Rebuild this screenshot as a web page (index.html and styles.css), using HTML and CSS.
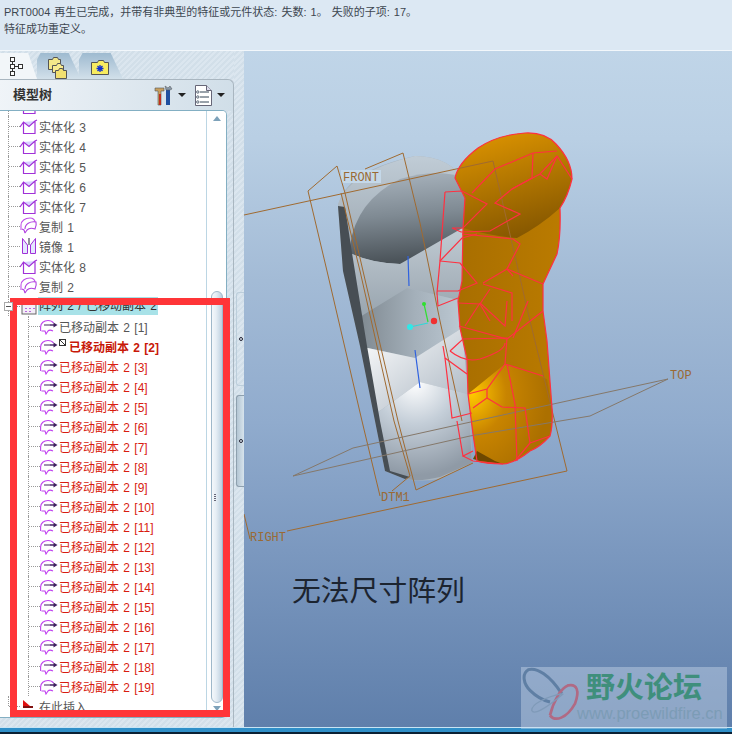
FILE: index.html
```html
<!DOCTYPE html>
<html lang="zh">
<head>
<meta charset="utf-8">
<title>模型树</title>
<link rel="stylesheet" href="styles.css">
</head>
<body>
<svg class="defs" width="0" height="0">
  <symbol id="solid" viewBox="0 0 18 18"><path d="M3.500 5L9 9.500 15 4z" fill="#d8d0ff"/><path d="M0 10L3.500 5 9 9.500 15 4l2-1M3.500 6v10.500H15V4" fill="none" stroke="#a030d8" stroke-width="1.200"/></symbol>
  <symbol id="copy" viewBox="0 0 18 18"><path d="M1 13V8C1 4 5 1 10 1c3 0 5 2 5 4" fill="none" stroke="#c050e8" stroke-width="1.100"/><path d="M5 16l-1-3-2-1M5 16l2-3c2-2 5-2 8-1 1-2 1.500-5 1-7-6-1-11 2-11 7" fill="none" stroke="#b040e0" stroke-width="1.100"/></symbol>
  <symbol id="mirror" viewBox="0 0 18 18"><path d="M2.500 1.500V16.500H7.500V8zM15.500 1.500V16.500H10.500V8z" fill="#e4e8ff" stroke="#a030d8"/><path d="M8.500 1v7M9.500 1v7" stroke="#445" stroke-width=".6"/></symbol>
  <symbol id="moved" viewBox="0 0 18 18"><path d="M.6 14V10C.6 6 4 3.500 8 3.500c2.500 0 4.500 1 5.500 2.500M13 14c-2-1-4-1-5 0l-2 3-1-3H1.500" fill="none" stroke="#c040f0" stroke-width="1.100"/><path d="M5 7v2M7 7v2M9 7v2" stroke="#402060"/><path d="M10 8h4" stroke="#402060" stroke-width="1.400"/><path d="M13.500 5.500l4 2.500-4 2.500z" fill="#402060"/></symbol>
  <symbol id="pattern" viewBox="0 0 18 18"><rect x="2" y="4" width="14" height="13" fill="#f4eef8" stroke="#666"/><path d="M6 7v1M10 7v1M14 7v1M6 11v1M10 11v1M14 11v1M6 14v1M10 14v1" stroke="#a030d0" stroke-width="1.400"/></symbol>
</svg>

<header class="messages">
  <p class="msg msg-clipped"><span class="msg-mark"></span>特征成功重定义。</p>
  <p class="msg">PRT0004 再生已完成，并带有非典型的特征或元件状态: 失数: 1。 失败的子项: 17。</p>
  <p class="msg">特征成功重定义。</p>
</header>

<main class="workspace">
  <aside class="sidebar">
    <nav class="tabs">
      <div class="tab tab-active">
        <svg width="18" height="20" viewBox="0 0 18 20"><g fill="#fff" stroke="#333"><rect x="1.500" y="1.500" width="4" height="4"/><rect x="1.500" y="8.500" width="4" height="4"/><rect x="1.500" y="15.500" width="4" height="4"/><rect x="9.500" y="8.500" width="4" height="4"/></g><path d="M3.500 6v2M3.500 13v2M6 10.500h3" stroke="#333"/></svg>
      </div>
      <div class="tab tab-second">
        <svg width="20" height="24" viewBox="0 0 20 24"><g stroke="#555"><path d="M1.500 4.500h4l1-2h4l1 2h2v10h-12z" fill="#f4e88a"/><path d="M5.500 10.500h4l1-2h3l1 2h2v7h-11z" fill="#f8ec90"/><path d="M8.500 15.500h3l1-2h3l1 2h3v8h-11z" fill="#f2e070"/></g></svg>
      </div>
      <div class="tab tab-third">
        <svg width="18" height="16" viewBox="0 0 18 16"><path d="M.5 3.500h6l1-2h5l1 2h4v12H.5z" fill="#f8ec60" stroke="#555"/><path d="M9 6v7M5.500 9.500h7M6.500 7l5 5M11.500 7l-5 5" stroke="#1030d0" stroke-width="1.300"/></svg>
      </div>
    </nav>
    <section class="panel">
      <div class="panel-head">
        <h1 class="panel-title">模型树</h1>
        <div class="panel-tools">
          <svg width="19" height="21" viewBox="0 0 19 21"><path d="M1 3h9v3H7v14H4V6H1z" fill="#c8a060" stroke="#555" stroke-width=".6"/><path d="M5 9h2v11H5z" fill="#c03020"/><path d="M12 5h4v15h-4z" fill="#2050a0"/><path d="M12 5l-1-4 3 2 2-2 2 3-2 1z" fill="#8898a8" stroke="#555" stroke-width=".5"/></svg>
          <span class="caret"></span>
          <svg class="tool-list" width="17" height="21" viewBox="0 0 17 21"><path d="M.5.500h11l5 5v15H.5z" fill="#fff" stroke="#667"/><path d="M11.500.5v5h5" fill="#dde" stroke="#667"/><g stroke="#345"><path d="M5 7h9M5 12h9M5 17h9"/></g><g fill="#fff" stroke="#345" stroke-width=".8"><circle cx="2.800" cy="7" r="1.200"/><circle cx="2.800" cy="12" r="1.200"/><circle cx="2.800" cy="17" r="1.200"/></g></svg>
          <span class="caret"></span>
        </div>
      </div>
      <div class="tree">
        <ul class="rows">
          <li class="row"><svg class="ico"><use href="#solid"/></svg></li>
          <li class="row"><svg class="ico"><use href="#solid"/></svg>实体化 3</li>
          <li class="row"><svg class="ico"><use href="#solid"/></svg>实体化 4</li>
          <li class="row"><svg class="ico"><use href="#solid"/></svg>实体化 5</li>
          <li class="row"><svg class="ico"><use href="#solid"/></svg>实体化 6</li>
          <li class="row"><svg class="ico"><use href="#solid"/></svg>实体化 7</li>
          <li class="row"><svg class="ico"><use href="#copy"/></svg>复制 1</li>
          <li class="row"><svg class="ico"><use href="#mirror"/></svg>镜像 1</li>
          <li class="row"><svg class="ico"><use href="#solid"/></svg>实体化 8</li>
          <li class="row"><svg class="ico"><use href="#copy"/></svg>复制 2</li>
          <li class="row row-pattern"><span class="expander"></span><svg class="ico"><use href="#pattern"/></svg><span class="selected">阵列 2 / 已移动副本 2</span></li>
          <li class="row child"><svg class="ico"><use href="#moved"/></svg>已移动副本 2 [1]</li>
          <li class="row child fail-main"><svg class="ico"><use href="#moved"/></svg><span class="fail-mark"></span><b>已移动副本 2 [2]</b></li>
          <li class="row child fail"><svg class="ico"><use href="#moved"/></svg>已移动副本 2 [3]</li>
          <li class="row child fail"><svg class="ico"><use href="#moved"/></svg>已移动副本 2 [4]</li>
          <li class="row child fail"><svg class="ico"><use href="#moved"/></svg>已移动副本 2 [5]</li>
          <li class="row child fail"><svg class="ico"><use href="#moved"/></svg>已移动副本 2 [6]</li>
          <li class="row child fail"><svg class="ico"><use href="#moved"/></svg>已移动副本 2 [7]</li>
          <li class="row child fail"><svg class="ico"><use href="#moved"/></svg>已移动副本 2 [8]</li>
          <li class="row child fail"><svg class="ico"><use href="#moved"/></svg>已移动副本 2 [9]</li>
          <li class="row child fail"><svg class="ico"><use href="#moved"/></svg>已移动副本 2 [10]</li>
          <li class="row child fail"><svg class="ico"><use href="#moved"/></svg>已移动副本 2 [11]</li>
          <li class="row child fail"><svg class="ico"><use href="#moved"/></svg>已移动副本 2 [12]</li>
          <li class="row child fail"><svg class="ico"><use href="#moved"/></svg>已移动副本 2 [13]</li>
          <li class="row child fail"><svg class="ico"><use href="#moved"/></svg>已移动副本 2 [14]</li>
          <li class="row child fail"><svg class="ico"><use href="#moved"/></svg>已移动副本 2 [15]</li>
          <li class="row child fail"><svg class="ico"><use href="#moved"/></svg>已移动副本 2 [16]</li>
          <li class="row child fail"><svg class="ico"><use href="#moved"/></svg>已移动副本 2 [17]</li>
          <li class="row child fail"><svg class="ico"><use href="#moved"/></svg>已移动副本 2 [18]</li>
          <li class="row child fail"><svg class="ico"><use href="#moved"/></svg>已移动副本 2 [19]</li>
          <li class="row row-insert"><svg class="ico" viewBox="0 0 18 18"><path d="M3 3l7 6H3z" fill="#e01010"/><path d="M3 9h10v2H3z" fill="#801010"/></svg>在此插入</li>
        </ul>
        <div class="scrollbar">
          <span class="arrow-up"></span>
          <span class="thumb"><span class="grip"></span></span>
          <span class="arrow-down"></span>
        </div>
      </div>
    </section>
  </aside>
  <div class="sash">
    <span class="sash-handle handle-a"><i></i></span>
    <span class="sash-handle handle-b"><i></i></span>
  </div>
  <div class="viewport">
    <svg class="model" viewBox="244 50 488 677" width="488" height="677">
      <defs>
        <linearGradient id="dome-outer" x1="0" y1="0" x2="0" y2="1"><stop offset="0" stop-color="#c0ccd6"/><stop offset="1" stop-color="#98a3ac"/></linearGradient>
        <linearGradient id="dome" x1="0" y1="0" x2=".1" y2="1"><stop offset="0" stop-color="#aab5bf"/><stop offset=".5" stop-color="#7f8a93"/><stop offset="1" stop-color="#4b5359"/></linearGradient>
        <linearGradient id="band2" x1="0" y1="0" x2="0" y2="1"><stop offset="0" stop-color="#c2ccd4"/><stop offset="1" stop-color="#98a4ae"/></linearGradient>
        <linearGradient id="band3" x1="0" y1="0" x2="1" y2="0"><stop offset="0" stop-color="#7e8890"/><stop offset=".55" stop-color="#a4b0ba"/><stop offset="1" stop-color="#bcc8d2"/></linearGradient>
        <linearGradient id="band4" x1="0" y1="0" x2="1" y2="1"><stop offset="0" stop-color="#fff"/><stop offset="1" stop-color="#a8b4c0"/></linearGradient>
        <radialGradient id="band5" cx=".4" cy="0" r=".95"><stop offset="0" stop-color="#fff"/><stop offset=".45" stop-color="#c4ced8"/><stop offset="1" stop-color="#8f9aa6"/></radialGradient>
        <linearGradient id="cap" x1=".3" y1="0" x2=".6" y2="1"><stop offset="0" stop-color="#da9200"/><stop offset="1" stop-color="#845600"/></linearGradient>
        <linearGradient id="orange" x1="0" y1="0" x2="1" y2="0"><stop offset="0" stop-color="#a86e00"/><stop offset="1" stop-color="#bc7c00"/></linearGradient>
        <radialGradient id="hot" cx=".05" cy=".3" r=".9"><stop offset="0" stop-color="#ffc800"/><stop offset=".45" stop-color="#c88400"/><stop offset="1" stop-color="#ac7000"/></radialGradient>
      </defs>

      <path d="M338 205Q345 170 415 155Q450 155 466 182L472 462L440 478Q420 481 405 478L385 470L375 420L360 345L343 270Z" fill="#a8b4be"/>
      <path d="M338 203Q350 170 415 155Q450 155 466 182L466 225Q440 258 400 263Q370 262 348 251Z" fill="url(#dome-outer)"/>
      <path d="M350 245Q356 200 400 178Q440 166 466 178L466 225Q440 258 400 263Q370 262 350 252Z" fill="url(#dome)"/>
      <path d="M348 251Q370 262 400 263L466 225L462 300L407 287L358 317Z" fill="url(#band2)"/>
      <path d="M358 317L407 287L462 300L462 327L415 357L363 346Z" fill="url(#band3)"/>
      <path d="M363 346L415 357L462 327L468 393L420 381L377 412Z" fill="url(#band4)"/>
      <path d="M377 412L420 381L468 393L472 462L440 476Q420 481 405 478L388 470Z" fill="url(#band5)"/>
      <path d="M338 205L343 270L360 345L375 420L385 470L405 478L410 476L390 470L380 420L367 345L352 252L345 206Z" fill="#474e54"/>

      <path d="M463 227L465 197L455 177Q458 162 478 147Q497 134 525 132Q545 131 556 143Q572 160 572 178Q568 195 560 207Q561 235 557 253L543 283L543 310L547 340L552 407Q553 425 550 435Q540 446 530 450Q515 462 503 463Q485 463 477 460L473 433L468 393L467 358L460 327L458 300L462 280Z" fill="url(#orange)"/>
      <path d="M468 393L505 363L547 378L552 407Q553 425 550 435Q540 446 530 450Q515 462 503 463Q485 463 477 460L473 433Z" fill="url(#hot)"/>
      <path d="M463 227L465 197L455 177Q458 162 478 147Q497 134 525 132Q545 131 556 143Q572 160 572 178Q568 195 560 207Q540 225 517 237Q490 235 463 227Z" fill="url(#cap)"/>
      <path d="M473 458L477 450L495 460L503 463L480 460Z" fill="#6e4800"/>

      <rect class="label-bg" x="341" y="169" width="40" height="13"/>
      <g fill="none" stroke="#a06a30" stroke-width="1">
        <path d="M244 214L493 160L530 320L567 470L287 530"/>
        <path d="M308 190L337 165L345 192L363 270L398 420L416 489L473 462"/>
        <path d="M365 168L403 152L420 222L440 320L462 420"/>
        <path d="M308 190L327 270L362 420L380 495"/>
        <path d="M341 192L360 270L394 420L410 475"/>
        <path d="M244 513L250 538"/>
        <path d="M392 490L410 475"/>
      </g>
      <path d="M293 475L353 447L457 424L590 395L668 378L590 415L470 435Z" fill="none" stroke="#85786a"/>

      <g fill="none" stroke="#ff3040" stroke-width="1.200">
        <path d="M463 227L465 197L455 177Q458 162 478 147Q497 134 525 132Q545 131 556 143Q572 160 572 178Q568 195 560 207Q561 235 557 253L543 283L543 310L547 340L552 407Q553 425 550 435Q540 446 530 450Q515 462 503 463Q485 463 477 460L473 433L468 393L467 358L460 327L458 300L462 280Z"/>
        <path d="M445 191L462 190L487 203L463 227L452 227L461 231L490 230L520 213L495 202L512 188L540 173L557 155L572 178"/>
        <path d="M472 192L495 168L533 152L557 150"/>
        <path d="M533 152L532 177L512 188"/>
        <path d="M540 173L547 178L557 155"/>
        <path d="M445 191L440 260L437 292L438 305L458 297"/>
        <path d="M437 290L458 290L477 282L460 262L440 260"/>
        <path d="M440 260L462 237L477 233"/>
        <path d="M462 233L513 238L520 243L507 268L543 283"/>
        <path d="M483 282L507 268M483 283L512 292L512 320"/>
        <path d="M458 302L480 303L490 320M480 303L490 288M507 268L513 275"/>
        <path d="M459 325L507 338L543 310"/>
        <path d="M450 350L463 338L507 337L505 363L543 375"/>
        <path d="M450 350Q465 362 480 358Q505 350 505 342"/>
        <path d="M505 363L487 388L468 393"/>
        <path d="M487 388V397L473 407"/>
        <path d="M487 397L502 406L525 407L530 442L550 435"/>
        <path d="M530 442L515 460"/>
        <path d="M443 345L445 357L452 417L472 412"/>
        <path d="M445 357L467 373"/>
        <path d="M457 420L463 455L473 450"/>
        <path d="M463 455L473 460L503 463"/>
        <path d="M480 302L505 325L507 300"/>
        <path d="M480 302L465 325"/>
        <path d="M513 337L528 300"/>
        <path d="M507 363L515 403L517 460"/>
      </g>

      <path d="M408 255L409 285M415 349L420 387" stroke="#2f62e0" stroke-width="1.200" fill="none"/>
      <path d="M424 303L428 321" stroke="#30e030" stroke-width="1.200"/>
      <path d="M410 326L428 322" stroke="#30d8d8" stroke-width="1.200"/>
      <circle cx="424" cy="303" r="2" fill="#30e030"/>
      <circle cx="410" cy="326" r="3" fill="#30e8e8"/>
      <circle cx="434" cy="320" r="3.200" fill="#f03030"/>

      <g class="datum">
        <text x="343" y="180">FRONT</text>
        <text x="670" y="378">TOP</text>
        <text x="381" y="500">DTM1</text>
        <text x="250" y="540">RIGHT</text>
      </g>
    </svg>
    <p class="note">无法尺寸阵列</p>
  </div>
  <div class="highlight"></div>
  <div class="watermark">
    <svg class="logo" width="60" height="60" viewBox="66 60 180 180"><path d="M185 140C150 85 110 60 85 68C65 80 70 110 90 130C110 150 130 160 150 165" fill="none" stroke="#5f7fa4" stroke-width="9"/><path d="M150 205C165 225 200 215 225 170C240 130 230 110 205 115C180 125 160 165 150 205" fill="none" stroke="#b06a84" stroke-width="8"/><path d="M185 140C140 150 95 170 95 190C100 205 130 190 190 140" fill="none" stroke="#7f9ab8" stroke-width="4"/></svg>
    <div class="brand">
      <span class="brand-name">野火论坛</span>
      <span class="brand-url">www.proewildfire.cn</span>
    </div>
  </div>
</main>
<footer class="statusbar"></footer>
</body>
</html>
```

FILE: styles.css
```css
* { box-sizing: border-box; }
html, body { margin: 0; padding: 0; }
body {
  width: 732px;
  height: 734px;
  overflow: hidden;
  position: relative;
  background: #dbe7f1;
  font-family: "Liberation Sans", "Noto Sans CJK SC", sans-serif;
  font-size: 12px;
  word-spacing: 1px;
  color: #444;
}
.defs { position: absolute; }
.messages {
  height: 51px;
  padding: 0 4px;
  overflow: hidden;
  background: #dce8f3;
  border-bottom: 1px solid #f2f7fb;
  color: #3c4650;
  font-size: 11px;
  word-spacing: 1px;
}
.msg { margin: 0; height: 17px; line-height: 17px; white-space: nowrap; }
.msg-clipped { margin-top: -13px; }
.msg-mark { display: inline-block; width: 7px; height: 7px; background: #f8d820; border: 1px solid #222; }
.workspace { display: flex; height: 676px; position: relative; }
.sidebar {
  width: 234px;
  display: flex;
  flex-direction: column;
  background: repeating-linear-gradient(135deg, #dbe6ef 0 2px, #d2dfe9 2px 4px);
}
.tabs { height: 28px; display: flex; padding-top: 2px; }
.tab {
  width: 44px;
  height: 26px;
  margin-right: -2px;
  display: flex;
  align-items: center;
  justify-content: center;
  background: linear-gradient(#9ebad0, #d2e0ea);
  clip-path: polygon(0 100%, 0 25%, 8% 0, 72% 0, 100% 100%);
}
.tab-active { width: 37px; margin-right: 0; background: #f2f6f9; justify-content: flex-start; padding-left: 9px; clip-path: polygon(0 0, 76% 0, 100% 100%, 0 100%); }
.tab-second svg { margin-top: 2px; margin-left: -4px; }
.tab-third svg { margin-top: 2px; margin-left: -2px; }
.panel {
  flex: 1;
  display: flex;
  flex-direction: column;
  min-height: 0;
  border-top: 1px solid #a9b6c0;
  border-right: 1px solid #a9b6c0;
  border-top-right-radius: 6px;
  padding-bottom: 9px;
  background: linear-gradient(100deg, #f0f4f8 0, #d0dee8 100%) top / 100% 31px no-repeat;
}
.panel-head {
  height: 30px;
  flex: none;
  display: flex;
  align-items: center;
  justify-content: space-between;
  padding: 0 8px 0 13px;
}
.panel-title { margin: -3px 0 0; font-size: 13px; font-weight: 700; color: #333; }
.panel-tools { display: flex; align-items: center; }
.tool-list { margin-left: 9px; }
.caret { width: 0; height: 0; margin-left: 5px; border: 4px solid transparent; border-top: 4px solid #222; border-bottom: 0; }
.tree {
  flex: 1;
  width: 227px;
  position: relative;
  overflow: hidden;
  background: #fff;
  border: 1px solid #83afc3;
  border-left: 0;
  border-radius: 0 5px 5px 0;
  display: flex;
  min-height: 0;
}
.rows { list-style: none; margin: -15px 0 0; padding: 0; flex: 1; min-width: 0; white-space: nowrap; }
.row { height: 20px; display: flex; align-items: center; padding-left: 20px; position: relative; color: #555; }
.row::before { content: ""; position: absolute; left: 9px; width: 11px; top: 10px; border-top: 1px dotted #999; }
.row::after { content: ""; position: absolute; left: 8px; top: 0; height: 20px; border-left: 1px dotted #999; }
.ico { width: 18px; height: 18px; flex: none; margin-right: 1px; }
.child { padding-left: 40px; }
.child::before { left: 29px; }
.child::after { left: 28px; }
.child .ico { margin-right: 1px; }
.row-insert::after { height: 10px; }
.fail { color: #d81c10; }
.fail-main { color: #c81808; }
.fail-main b { font-weight: 700; }
.fail-mark { width: 7px; height: 7px; margin: -7px 3px 0 0; background: linear-gradient(45deg, #fff 42%, #333 42% 58%, #fff 58%); border: 1px solid #333; flex: none; }
.row-pattern .ico { margin-right: 0; }
.selected { background: #a8e2e8; padding: 0 1px; height: 18px; line-height: 18px; color: #333; }
.expander { position: absolute; left: 4px; top: 6px; width: 9px; height: 9px; background: #fff; border: 1px solid #aaa; z-index: 1; }
.expander::after { content: ""; position: absolute; left: 1px; top: 3px; width: 5px; border-top: 1px solid #555; }
.scrollbar { width: 20px; flex: none; position: relative; background: #fff; border-left: 1px solid #bcd6e4; display: flex; flex-direction: column; align-items: center; }
.arrow-up { margin-top: 5px; border: 4px solid transparent; border-bottom: 5px solid #7ea2ba; border-top: 0; }
.arrow-down { margin-top: 3px; border: 4px solid transparent; border-top: 5px solid #7ea2ba; border-bottom: 0; }
.thumb {
  margin-top: 170px;
  width: 12px;
  height: 412px;
  border: 1px solid #9fb8ca;
  border-radius: 6px;
  background: linear-gradient(90deg, #f4f8fb, #e6eef5 40%, #bdd0df);
  display: flex;
  align-items: center;
  justify-content: center;
}
.grip { width: 2px; height: 7px; background: repeating-linear-gradient(#667 0 1px, transparent 1px 2px); margin-right: 4px; }
.sash { width: 10px; display: flex; flex-direction: column; background: repeating-linear-gradient(135deg, #dbe6ef 0 2px, #d2dfe9 2px 4px); padding-top: 241px; gap: 9px; }
.sash-handle { width: 9px; margin-left: 2px; border-radius: 3px 0 0 3px; display: flex; align-items: center; justify-content: center; }
.handle-a { height: 94px; border: 1px solid #bccedb; border-right: 0; }
.handle-b { height: 92px; border: 1px solid #8ea0ae; border-right: 0; background: linear-gradient(90deg, #b4c6d4, #dce8f0); }
.sash-handle i { width: 4px; height: 4px; background: #dfe8ef; border: 1px solid #223; border-radius: 2px; }
.viewport {
  flex: 1;
  position: relative;
  overflow: hidden;
  background: linear-gradient(#c0d5e8 0, #b9cfe4 13%, #a3bbd6 34%, #90abcd 55%, #7b98bf 74%, #5f7fab 100%);
}
.model { display: block; }
.label-bg { fill: #c4d8e9; }
.datum text { font-family: "Liberation Mono", monospace; font-size: 12px; word-spacing: 0; fill: #9a6a34; }
.note {
  position: absolute;
  left: 48px;
  top: 518px;
  margin: 0;
  font-family: "Noto Sans CJK SC", sans-serif;
  font-size: 28.800px;
  line-height: 40px;
  color: #1c2430;
}
.highlight {
  position: absolute;
  left: 10px;
  top: 247px;
  width: 220px;
  height: 419px;
  border: 7px solid #ff3538;
}
.watermark {
  position: absolute;
  left: 521px;
  top: 616px;
  width: 206px;
  height: 62px;
  display: flex;
  background: rgba(205, 220, 235, .42);
}
.logo { flex: none; margin: 0 0 0 1px; }
.brand { display: flex; flex-direction: column; margin-left: -5px; padding-top: 0; }
.brand-name { font-family: "Noto Sans CJK SC", sans-serif; font-weight: 700; font-size: 29px; line-height: 36px; color: #3f8f7c; padding-left: 9px; }
.brand-url { font-family: "Liberation Sans", sans-serif; font-size: 16.500px; line-height: 20px; color: #7c9cb6; word-spacing: 0; }
.statusbar {
  height: 7px;
  background: linear-gradient(#c8e4f4 0 1px, #2f8fc8 1px 5px, #0a2034 5px);
}
```
